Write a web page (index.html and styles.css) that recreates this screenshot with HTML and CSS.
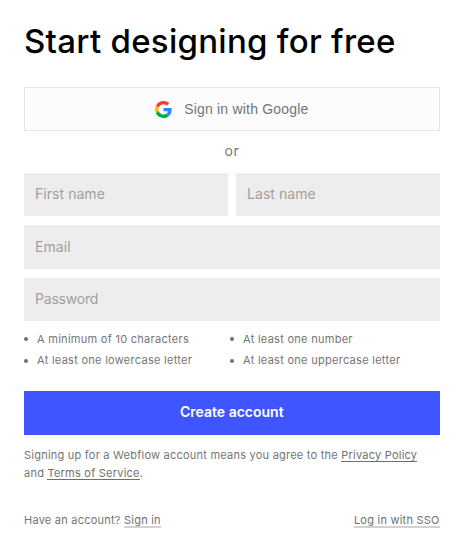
FILE: index.html
```html
<!DOCTYPE html>
<html lang="en">
<head>
  <meta charset="UTF-8">
  <meta name="viewport" content="width=device-width, initial-scale=1.0">
  <title>Start designing for free</title>
  <link rel="stylesheet" href="styles.css">
</head>
<body>
  <main class="signup">
    <h1>Start designing for free</h1>
    <button type="button" class="google-btn">
      <svg class="google-icon" viewBox="0 0 48 48">
        <path fill="#ff3a30" d="M24 9.5c3.54 0 6.71 1.22 9.21 3.6l6.85-6.85C35.9 2.38 30.47 0 24 0 14.62 0 6.51 5.38 2.56 13.22l7.98 6.19C12.43 13.72 17.74 9.5 24 9.5z"/>
        <path fill="#2688ff" d="M46.98 24.55c0-1.57-.15-3.09-.38-4.55H24v9.02h12.94c-.58 2.96-2.26 5.48-4.78 7.18l7.73 6c4.51-4.18 7.09-10.36 7.09-17.65z"/>
        <path fill="#ffbc00" d="M10.53 28.59c-.48-1.45-.76-2.99-.76-4.59s.27-3.14.76-4.59l-7.98-6.19C.92 16.46 0 20.12 0 24c0 3.88.92 7.54 2.56 10.78l7.97-6.19z"/>
        <path fill="#00ac47" d="M24 48c6.48 0 11.93-2.13 15.89-5.81l-7.73-6c-2.15 1.45-4.92 2.3-8.16 2.3-6.26 0-11.57-4.22-13.47-9.91l-7.98 6.19C6.51 42.62 14.62 48 24 48z"/>
      </svg>
      <span>Sign in with Google</span>
    </button>
    <div class="or">or</div>
    <form>
      <div class="names">
        <input type="text" placeholder="First name">
        <input type="text" placeholder="Last name">
      </div>
      <input type="email" placeholder="Email">
      <input type="password" class="password" placeholder="Password">
      <ul class="rules">
        <li>A minimum of 10 characters</li>
        <li>At least one number</li>
        <li>At least one lowercase letter</li>
        <li>At least one uppercase letter</li>
      </ul>
      <button type="button" class="create-btn">Create account</button>
    </form>
    <p class="terms">Signing up for a Webflow account means you agree to the <a href="#">Privacy Policy</a><br>and <a href="#">Terms of Service</a>.</p>
    <div class="bottom">
      <div>Have an account? <a href="#">Sign in</a></div>
      <a href="#">Log in with SSO</a>
    </div>
  </main>
</body>
</html>
```
FILE: styles.css
```css
* {
  box-sizing: border-box;
}
body {
  margin: 0;
  background: #fff;
  color: #757575;
  font-family: Inter, "Liberation Sans", sans-serif;
}
.signup {
  width: 415.7px;
  margin-left: 24px;
  padding-top: 21px;
}
h1 {
  margin: 0 0 26px;
  color: #000;
  font-size: 33px;
  font-weight: 500;
  line-height: 40px;
  letter-spacing: 0.28px;
  white-space: nowrap;
}
.google-btn {
  display: flex;
  align-items: center;
  justify-content: center;
  gap: 12px;
  width: 100%;
  height: 44px;
  padding: 0;
  border: 1px solid #e6e6e6;
  background: #fcfcfc;
  color: #757575;
  font-family: "Liberation Sans", Arial, sans-serif;
  font-size: 14px;
  letter-spacing: 0.2px;
}
.google-icon {
  width: 17px;
  height: 17px;
}
.or {
  height: 42px;
  font-size: 14px;
  line-height: 40px;
  letter-spacing: 0.4px;
  text-align: center;
}
.names {
  display: grid;
  grid-template-columns: 204px 203.7px;
  gap: 8px;
}
input {
  display: block;
  width: 100%;
  height: 43.4px;
  margin: 0 0 9px;
  padding: 0 11px 2px;
  border: 0;
  border-radius: 0;
  background: #ededed;
  font-family: inherit;
  font-size: 14px;
  letter-spacing: 0.05px;
}
input::placeholder {
  color: #a0a0a0;
}
.password {
  margin-bottom: 7.5px;
  letter-spacing: -0.2px;
}
.rules {
  display: grid;
  grid-template-columns: 206px 209px;
  margin: 0 0 19px;
  padding: 0;
  list-style: none;
  font-size: 11px;
  line-height: 21.5px;
  letter-spacing: 0.28px;
}
.rules li {
  display: flex;
  align-items: center;
  gap: 9px;
  white-space: nowrap;
}
.rules li::before {
  content: "";
  width: 4px;
  height: 4px;
  border-radius: 50%;
  background: #707070;
}
.create-btn {
  display: block;
  width: 100%;
  height: 44px;
  padding: 0 0 2px;
  border: 0;
  background: #3f55ff;
  color: #fff;
  font-family: inherit;
  font-size: 14px;
  font-weight: 600;
}
.terms {
  margin: 12.5px 0 32px;
  font-size: 11px;
  line-height: 17.5px;
  letter-spacing: 0.23px;
  white-space: nowrap;
}
a {
  display: inline-block;
  border-bottom: 1px solid #707070;
  color: #707070;
  line-height: 12px;
  text-decoration: none;
}
.bottom {
  display: flex;
  align-items: baseline;
  justify-content: space-between;
  font-size: 11px;
  line-height: 13px;
  letter-spacing: 0.23px;
}
.bottom a {
  border-bottom: 2px solid #d2d2d2;
}
```
